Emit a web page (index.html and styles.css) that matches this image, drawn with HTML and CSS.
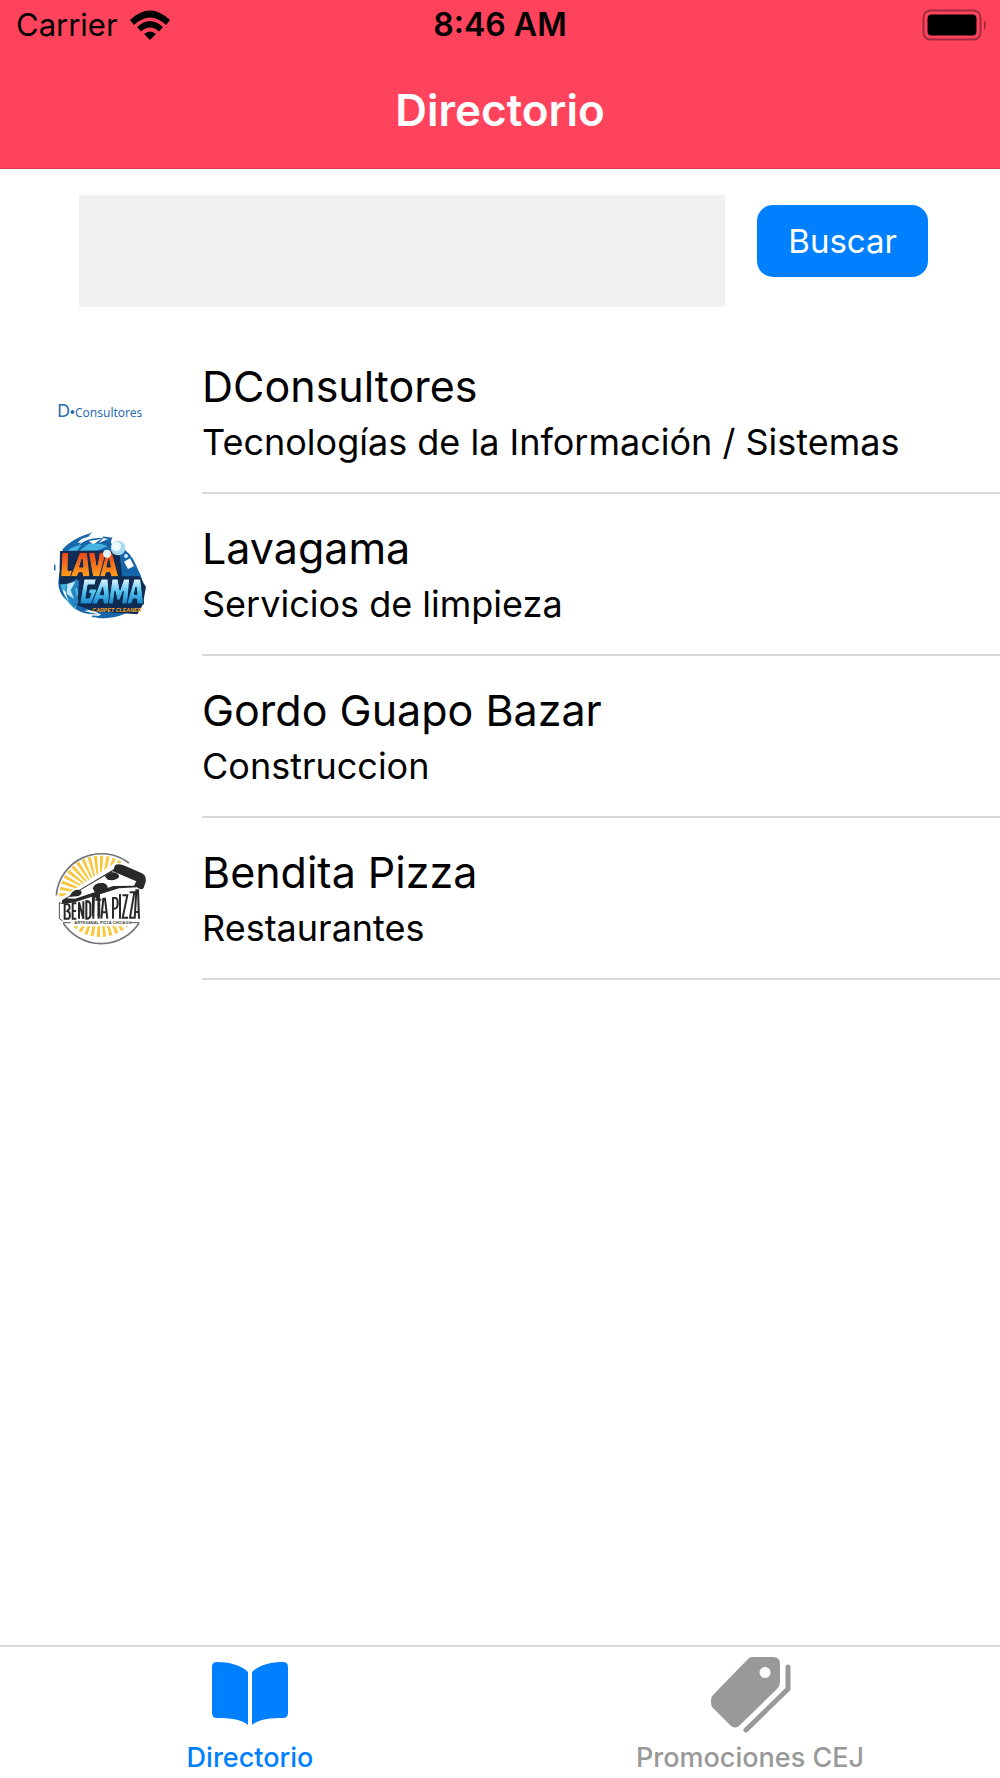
FILE: index.html
```html
<!DOCTYPE html>
<html lang="es">
<head>
<meta charset="utf-8">
<meta name="viewport" content="width=device-width, initial-scale=1">
<title>Directorio</title>
<link rel="stylesheet" href="styles.css">
</head>
<body>
<header class="header">
  <div class="status">
    <div class="status-carrier">
      <span>Carrier</span>
      <svg class="wifi" viewBox="0 0 40 30" aria-hidden="true">
        <path d="M0 10Q20 -9 40 10L36 15Q20 0 4 15Z"/>
        <path d="M7 17Q20 5 33 17L29 21.500Q20 13.500 11 21.500Z"/>
        <path d="M14 24Q20 19 26 24L20 30Z"/>
      </svg>
    </div>
    <span class="status-time">8:46 AM</span>
    <svg class="battery" viewBox="0 0 66 32" aria-hidden="true">
      <rect x="1.500" y="1.500" width="57" height="29" rx="7" fill="none" stroke="#a32a3c" stroke-width="2"/>
      <rect x="5.500" y="5.500" width="49" height="21" rx="4"/>
      <path d="M62 11q4 5 0 10z" fill="#a32a3c"/>
    </svg>
  </div>
  <h1 class="title">Directorio</h1>
</header>

<main class="main">
  <form class="search">
    <input class="search-input" type="text" aria-label="Buscar en el directorio">
    <button class="search-button" type="button">Buscar</button>
  </form>

  <ul class="list">
    <li class="row">
      <svg class="logo" viewBox="0 0 92 92" role="img" aria-label="D·Consultores" fill="#2c6cb0">
        <text class="logo-initial" x="3" y="50">D</text>
        <circle cx="18.500" cy="45" r="2"/>
        <text class="logo-word" x="21" y="50">Consultores</text>
      </svg>
      <div class="row-text">
        <h2 class="row-name">DConsultores</h2>
        <p class="row-kind">Tecnologías de la Información / Sistemas</p>
      </div>
    </li>
    <li class="row">
      <svg class="logo" viewBox="42 42 276 276" role="img" aria-label="Lavagama Carpet Cleaner">
        <defs>
          <linearGradient id="fire" x1="0" y1="0" x2="0" y2="1"><stop offset="0" stop-color="#e9441c"/><stop offset="1" stop-color="#ffa01e"/></linearGradient>
          <linearGradient id="water" x1="0" y1="0" x2="0" y2="1"><stop offset="0" stop-color="#e4f8ff"/><stop offset=".5" stop-color="#55c3ee"/><stop offset="1" stop-color="#1784cc"/></linearGradient>
        </defs>
        <path fill="#1766aa" d="M62 122C70 88 112 66 158 52Q128 76 116 90Q148 64 190 70L176 84L218 66Q208 82 218 90L252 96Q286 122 296 164Q322 216 296 262Q252 318 170 308L184 296Q118 306 82 258Q50 232 56 192Z"/>
        <path fill="#45b4e3" d="M72 118Q92 92 126 90Q108 106 112 112L146 86Q178 82 202 94L160 112L70 136ZM60 198L100 190L118 236L106 284Q66 248 60 198ZM126 270L160 280L154 296Z"/>
        <path fill="#fff" d="M112 84Q126 68 142 64L124 82ZM52 168L64 142L62 176ZM146 78L184 72L160 88ZM68 224Q76 252 92 260L82 232ZM252 140L270 130L282 154L264 162ZM132 288L156 284L184 300ZM236 92L262 84L312 150L306 190L288 150Q272 110 236 92Z"/>
        <path fill="none" stroke="#1669aa" stroke-width="5" stroke-linecap="round" d="M44 151V164M190 67L212 70M158 304L192 306M70 104Q98 74 146 62"/>
        <path fill="#102b54" d="M60 108L238 106L246 184L298 184L318 216L308 270L292 298L156 288L110 270L118 206L58 208Z"/>
        <path fill="#2586c3" d="M76 212L110 192L118 200L105 224L116 262L102 278Q72 244 76 212Z"/>
        <path fill="#bde9f8" d="M82 206L106 200L92 226L102 252L80 236Z"/>
        <g fill="url(#fire)" stroke="#09264a" stroke-width="3" fill-rule="evenodd">
          <path d="M66 112H86L84 166H106L102 185H62Z"/>
          <path d="M119 112H142L150 185H128L126 173H117L112 185H91ZM126 132L119 156H129Z"/>
          <path d="M145 112H165L171 151L178 112H199L180 185H158Z"/>
          <path d="M199 112H217L236 185H213L210 173H199L196 185H179ZM206 132L201 156H211Z"/>
        </g>
        <g fill="url(#water)" stroke="#09264a" stroke-width="3" fill-rule="evenodd">
          <path d="M132 192H169L165 210H144L138 249H148L152 235H145L148 222H171L162 267H119Z"/>
          <path d="M184 192H204L210 267H190L188 253H178L172 267H154ZM188 217L181 239H191Z"/>
          <path d="M216 192H234L240 225L251 192H269L263 267H245L250 229L239 256H231L225 229L220 267H205Z"/>
          <path d="M282 192H302L311 267H291L289 252H280L275 267H260ZM288 216L283 238H291Z"/>
        </g>
        <circle cx="234" cy="99" r="22" fill="#a6d9ed"/><circle cx="229" cy="94" r="14" fill="#effaff"/>
        <circle cx="201" cy="116" r="12" fill="#def3fb"/><circle cx="258" cy="123" r="6" fill="#c7edf7"/>
        <text class="logo-tagline" x="157" y="290">CARPET CLEANER</text>
      </svg>
      <div class="row-text">
        <h2 class="row-name">Lavagama</h2>
        <p class="row-kind">Servicios de limpieza</p>
      </div>
    </li>
    <li class="row">
      <span class="logo"></span>
      <div class="row-text">
        <h2 class="row-name">Gordo Guapo Bazar</h2>
        <p class="row-kind">Construccion</p>
      </div>
    </li>
    <li class="row">
      <svg class="logo" viewBox="42 39 276 276" role="img" aria-label="Bendita Pizza">
        <circle cx="184" cy="176" r="132" fill="#fff"/>
        <path fill="none" stroke="#777" stroke-width="5" d="M49 166A136 136 0 0 1 267 69M70 250A136 136 0 0 0 297 250"/>
        <circle cx="180" cy="169" r="90" fill="none" stroke="#f8c842" stroke-width="64" pathLength="120" stroke-dasharray="1.600 1.400"/>
        <path fill="#fff" d="M42 187L225 68L330 80V248H45Z"/>
        <path fill="#fff" d="M85 238H283V259H85Z"/>
        <path fill="#292929" d="M66 181L221 88L225 76Q236 68 256 78L306 100Q320 107 317 126L311 143Q305 153 291 142L237 145L104 187L66 192Z"/>
        <path fill="#fff" d="M80 175L218 94L289 124L282 137L220 138L105 176Z"/>
        <path fill="#292929" d="M94 160Q105 145 122 151Q130 161 116 168L88 171ZM158 145Q164 127 190 129Q207 134 202 149Q188 165 165 158ZM194 108L212 96Q240 98 237 112Q226 124 203 119Z"/>
        <path fill="#292929" d="M156 162H180L181 230H173V180L165 172L162 222L155 230Z"/>
        <g fill="none" stroke="#292929" stroke-width="6">
          <path d="M74 193V236H86Q92 232 88 217L82 213L88 207Q90 194 84 193Z"/>
          <path d="M109 190H98V236H109M98 213H108M117 236V187L130 236V184"/>
          <path d="M139 183V236Q151 236 151 224V193Q149 183 139 183ZM160 180V236M166 179H184M176 179V236M184 236L190 176H195L202 236M187 217H198"/>
          <path d="M219 236V174H226Q234 174 233 190Q234 207 219 207M240 162V236M247 166H262L248 233H264M269 157H283L270 233H284M284 236L289 151H294L297 236M286 216H296"/>
        </g>
        <path d="M66 192L58 187V236L68 243M69 248H92M270 248H298" fill="none" stroke="#555" stroke-width="3"/>
        <text class="logo-motto" x="103" y="253">ARTESANAL PIZZA CHICAGO</text>
      </svg>
      <div class="row-text">
        <h2 class="row-name">Bendita Pizza</h2>
        <p class="row-kind">Restaurantes</p>
      </div>
    </li>
  </ul>
</main>

<nav class="tabs">
  <a class="tab tab-active" href="#directorio">
    <svg class="tab-icon" viewBox="0 0 84 80" fill="currentColor" aria-hidden="true">
      <path d="M40 19C33 12 21 9 9 9Q4 9 4 14V60Q4 65 9 65C22 65 33 66 40 72ZM44 19C51 12 63 9 75 9Q80 9 80 14V60Q80 65 75 65C62 65 51 66 44 72Z"/>
    </svg>
    <span>Directorio</span>
  </a>
  <a class="tab" href="#promociones">
    <svg class="tab-icon" viewBox="0 0 84 80" fill="currentColor" aria-hidden="true">
      <path fill-rule="evenodd" d="M44 4H65Q72 4 72 11V29Q72 33 69 36L32 72Q27 77 22 72L5 55Q3 53 3 50V47Q3 44 5 42L39 7Q41 4 44 4ZM57 14a5.500 5.500 0 1 0 .1 0Z"/>
      <path fill="none" stroke="currentColor" stroke-width="5" stroke-linecap="round" d="M80 14V36L38 77"/>
    </svg>
    <span>Promociones CEJ</span>
  </a>
</nav>
</body>
</html>
```
FILE: styles.css
```css
* {
  box-sizing: border-box;
}

body {
  margin: 0;
  min-height: 100vh;
  display: flex;
  flex-direction: column;
  background: #fff;
  color: #000;
  font-family: Inter, "Liberation Sans", sans-serif;
}

.header {
  background: #ff435c;
  border-bottom: 1px solid #d13a4e;
}

.status {
  display: grid;
  grid-template-columns: 1fr auto 1fr;
  align-items: center;
  padding: 0 12px;
  font-size: 31px;
  line-height: 50px;
}

.status-carrier {
  display: flex;
  align-items: center;
  gap: 12px;
  padding-left: 4px;
}

.wifi {
  width: 40px;
  height: 30px;
}

.status-time {
  font-size: 32px;
  font-weight: 600;
}

.battery {
  width: 66px;
  height: 32px;
  justify-self: end;
}

.title {
  margin: 0;
  padding: 30px 0 28px;
  color: #fff;
  font-size: 44px;
  font-weight: 600;
  line-height: 60px;
  text-align: center;
}

.main {
  flex: 1;
}

.search {
  display: flex;
  align-items: flex-start;
  gap: 32px;
  padding: 26px 72px 25px 79px;
}

.search-input {
  flex: 1;
  min-width: 0;
  height: 112px;
  padding: 0 24px;
  border: 0;
  border-radius: 0;
  background: #f1f1f1;
  font: inherit;
  font-size: 36px;
}

.search-button {
  margin: 10px 0 0;
  padding: 0 31px;
  border: 0;
  border-radius: 16px;
  background: #0080ff;
  color: #fff;
  font: inherit;
  font-size: 33px;
  line-height: 72px;
}

.list {
  margin: 0;
  padding: 0;
  list-style: none;
}

.row {
  display: flex;
  align-items: center;
  gap: 56px;
  padding-left: 54px;
}

.logo {
  flex: none;
  width: 92px;
  height: 92px;
}

.logo-initial,
.logo-word {
  font-family: "Noto Sans", sans-serif;
  font-size: 18px;
}

.logo-word {
  font-size: 12px;
}

.logo-tagline {
  fill: #ffad25;
  font-family: "Liberation Sans", sans-serif;
  font-size: 16px;
  font-style: italic;
  font-weight: 700;
}

.logo-motto {
  fill: #444;
  font-family: "Liberation Sans", sans-serif;
  font-size: 12px;
  font-weight: 700;
}

.row-text {
  flex: 1;
  min-width: 0;
  padding: 26px 0 22px;
  border-bottom: 2px solid #d8d8dc;
}

.row-name,
.row-kind {
  margin: 0;
  font-size: 43px;
  font-weight: 400;
  line-height: 56px;
}

.row-kind {
  font-size: 36px;
}

.tabs {
  display: flex;
  border-top: 2px solid #dcdcdc;
}

.tab {
  flex: 1;
  display: flex;
  flex-direction: column;
  align-items: center;
  gap: 5px;
  padding-top: 6px;
  color: #999;
  font-size: 27px;
  font-weight: 500;
  line-height: 40px;
  text-decoration: none;
}

.tab-active {
  color: #0080ff;
}

.tab-icon {
  width: 84px;
  height: 80px;
}
```
